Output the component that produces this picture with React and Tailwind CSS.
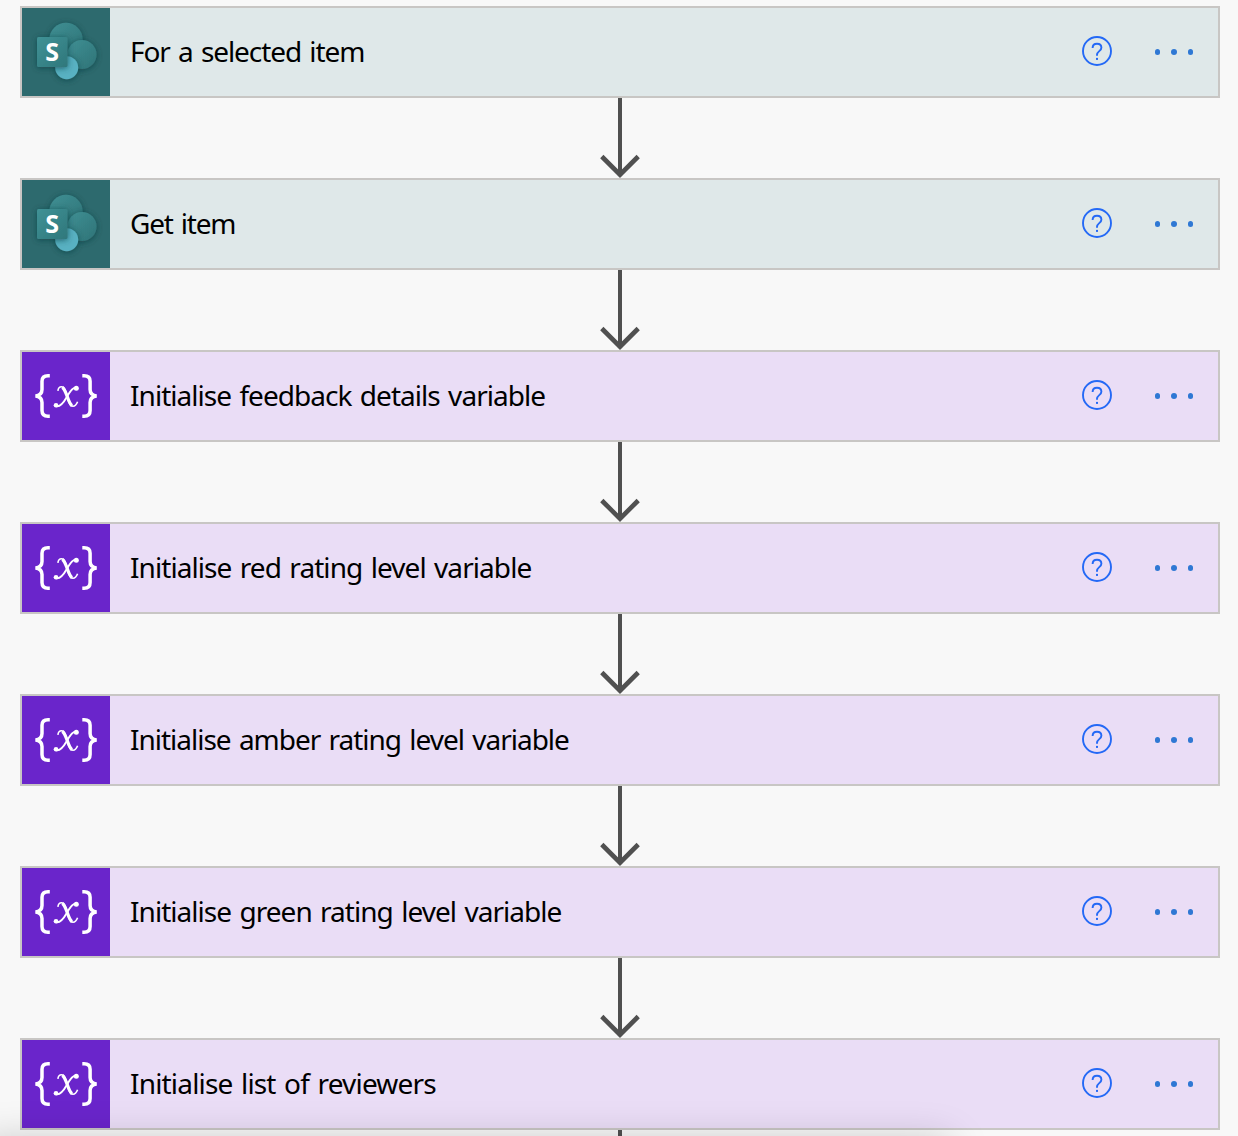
import React from "react";

const steps = [
  { title: "For a selected item", kind: "sharepoint", tracking: "tracking-[-1.07px]" },
  { title: "Get item", kind: "sharepoint", tracking: "tracking-[-1.2px]" },
  { title: "Initialise feedback details variable", kind: "variable", tracking: "tracking-[-0.96px]" },
  { title: "Initialise red rating level variable", kind: "variable", tracking: "tracking-[-0.93px]" },
  { title: "Initialise amber rating level variable", kind: "variable", tracking: "tracking-[-1.01px]" },
  { title: "Initialise green rating level variable", kind: "variable", tracking: "tracking-[-0.96px]" },
  { title: "Initialise list of reviewers", kind: "variable", tracking: "tracking-[-0.82px]" },
];

function SharePointIcon() {
  return (
    <svg className="size-[88px] shrink-0 bg-[#2d6a6e]" viewBox="0 0 88 88">
      <defs>
        <linearGradient id="disc" x1="0" y1="0" x2="1" y2="1">
          <stop offset="0" stopColor="#3f9094" />
          <stop offset="1" stopColor="#2f7377" />
        </linearGradient>
        <linearGradient id="tile" x1="0" y1="0" x2="1" y2="1">
          <stop offset="0" stopColor="#409296" />
          <stop offset="1" stopColor="#2f777b" />
        </linearGradient>
        <filter id="soft" x="-40%" y="-40%" width="180%" height="180%">
          <feDropShadow dx="0" dy="1" stdDeviation="3" floodColor="#123b3f" floodOpacity="0.7" />
        </filter>
      </defs>
      <circle cx="44" cy="31.500" r="16.700" fill="url(#disc)" filter="url(#soft)" />
      <circle cx="60" cy="46.500" r="14.600" fill="url(#disc)" filter="url(#soft)" />
      <circle cx="44.700" cy="59.700" r="11.500" fill="#58b1c2" filter="url(#soft)" />
      <rect x="15" y="29" width="30.500" height="30" rx="1.500" fill="url(#tile)" filter="url(#soft)" />
      <text x="30.200" y="52.500" textAnchor="middle" fill="#fff" fontFamily="Open Sans, sans-serif" fontWeight="700" fontSize="25">S</text>
    </svg>
  );
}

function VariableIcon() {
  return (
    <svg className="size-[88px] shrink-0 bg-[#6a25cb]" viewBox="0 0 88 88" fill="none" stroke="#fff">
      <path d="M27.800 23.700H26C21.900 23.700 20 25.500 20 29.200V37.500C20 41 17.600 43.500 13.500 44C17.600 44.500 20 47 20 50.500V58.500C20 62.200 21.900 64.300 26 64.300H27.800" strokeWidth="3.500" />
      <path d="M60.300 23.700H62.100C66.200 23.700 68.100 25.500 68.100 29.200V37.500C68.100 41 70.500 43.500 74.600 44C70.500 44.500 68.100 47 68.100 50.500V58.500C68.100 62.200 66.200 64.300 62.100 64.300H60.300" strokeWidth="3.500" />
      <path d="M35.900 38.800C36.200 36.400 37.500 34.800 39.500 34.800C46 34.800 44.500 54.300 51 54.300C53.200 54.300 54.500 52.500 55.600 49.800" strokeWidth="1.600" />
      <path d="M40.300 35.300C44.800 38.300 45.600 50.500 50 53.700" strokeWidth="3.200" />
      <path d="M54.200 35.600C50.500 35 47.300 40.500 44.500 45.500C41.500 50.800 38.300 55.500 33.800 54" strokeWidth="1.900" />
      <circle cx="54.300" cy="36.300" r="2.500" fill="#fff" stroke="none" />
      <circle cx="34" cy="53.300" r="2.300" fill="#fff" stroke="none" />
    </svg>
  );
}

function HelpIcon() {
  return (
    <svg className="mt-[-2px] size-8 shrink-0" viewBox="0 0 32 32" fill="none" stroke="#2469f6">
      <circle cx="16" cy="16" r="14" strokeWidth="1.900" />
      <path d="M11.600 13C11.600 10 13.400 8.700 16 8.700C18.700 8.700 20.400 10.300 20.400 12.700C20.400 16 16 16.300 16 19.800V20.800" strokeWidth="1.900" />
      <rect x="15" y="22.900" width="2" height="2" fill="#2469f6" stroke="none" />
    </svg>
  );
}

function Card({ title, kind, tracking }) {
  const sharepoint = kind === "sharepoint";
  return (
    <div className={`flex h-[92px] items-center border-2 border-[#c8c6c4] ${sharepoint ? "bg-[#dfe8e9]" : "bg-[#eaddf6]"}`}>
      {sharepoint ? <SharePointIcon /> : <VariableIcon />}
      <span className={`mb-0.5 ml-5 flex-1 whitespace-nowrap text-[28px] leading-10 text-black [word-spacing:2px] ${tracking}`}>{title}</span>
      <HelpIcon />
      <div className="mr-[25px] ml-[42px] flex gap-[11px]">
        <i className="size-[5.500px] rounded-full bg-[#2f78d4]" />
        <i className="size-[5.500px] rounded-full bg-[#2f78d4]" />
        <i className="size-[5.500px] rounded-full bg-[#2f78d4]" />
      </div>
    </div>
  );
}

function Arrow() {
  return (
    <svg className="mx-auto block h-20 w-10" viewBox="0 0 40 80" fill="none" stroke="#505050">
      <path d="M20 0V77" strokeWidth="4" />
      <path d="M1.800 58.500L20 76.700L38.200 58.500" strokeWidth="4.600" />
    </svg>
  );
}

export default function App() {
  return (
    <main className="relative h-[1136px] w-[1238px] overflow-hidden bg-[#f8f8f8] font-['Noto_Sans',sans-serif]">
      <div className="mx-auto w-[1200px] translate-x-px pt-1.5">
        {steps.map((step) => (
          <React.Fragment key={step.title}>
            <Card {...step} />
            <Arrow />
          </React.Fragment>
        ))}
      </div>
      <div className="pointer-events-none absolute top-[1142px] left-[-20px] h-20 w-[970px] shadow-[0_0_40px_rgba(0,0,0,0.22)]" />
    </main>
  );
}
